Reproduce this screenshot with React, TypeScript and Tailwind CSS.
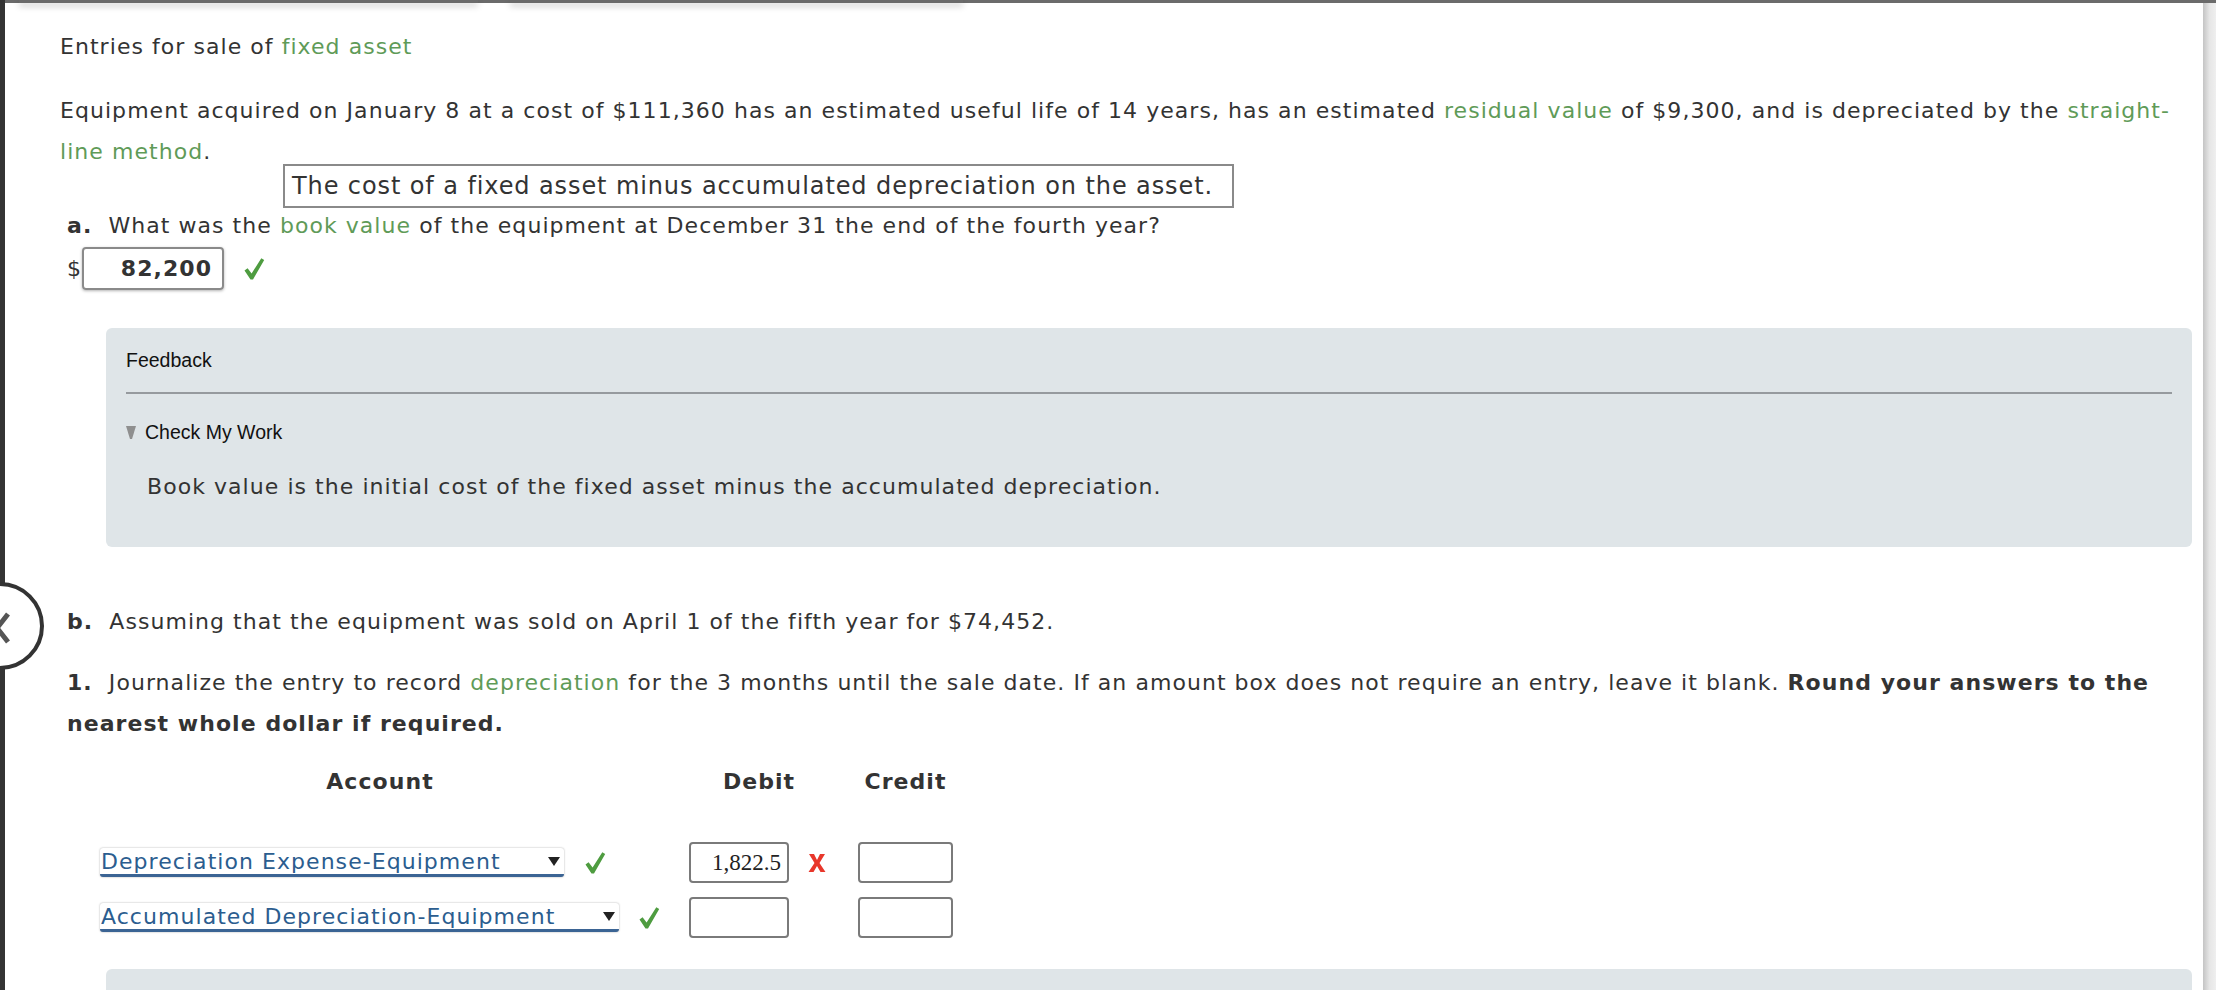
import React from "react";

const verdana = { fontFamily: '"DejaVu Sans", Verdana, sans-serif' };
const arial = { fontFamily: '"Liberation Sans", Arial, sans-serif' };
const times = { fontFamily: '"Liberation Serif", "Times New Roman", serif' };

function Term({ children }: { children: React.ReactNode }) {
    return <span className="text-[#5f9b58]">{children}</span>;
}

function Check({ className = "" }: { className?: string }) {
    return (
        <svg viewBox="0 0 22 24" className={`w-[22px] h-[24px] shrink-0 ${className}`}>
            <path d="M1.5 13.5 L4.6 11.3 L8.6 16.6 L18.3 1.2 L21.2 3 L10 22.6 L7.5 22.6 Z" fill="#4e9c40" />
        </svg>
    );
}

function Cross() {
    return (
        <svg viewBox="0 0 20 20" className="w-[20px] h-[20px] shrink-0">
            <path d="M2 1 L7 1 L10 7 L13 1 L18 1 L12.5 10 L18.5 19 L13.5 19 L10 13 L6.5 19 L1.5 19 L7.5 10 Z" fill="#e8372b" />
        </svg>
    );
}

function AccountSelect({ label, width }: { label: string; width: string }) {
    return (
        <div
            className={`${width} h-[29px] flex items-center justify-between bg-white rounded-[3px] border-b-[3px] border-[#3b6494] shadow-[0_0_2px_rgba(0,0,0,0.35)] text-[#2b5d8f] text-[22px] leading-none`}
        >
            <span className="pl-[1px] -mb-[2px]">{label}</span>
            <svg viewBox="0 0 12 9" className="w-[12px] h-[9px] mr-[4px]">
                <path d="M0 0 L12 0 L6 9 Z" fill="#222" />
            </svg>
        </div>
    );
}

function AmountInput({ value = "", width = "w-[100px]" }: { value?: string; width?: string }) {
    return (
        <div
            className={`${width} h-[41px] border-2 border-[#7a7a7a] rounded-[4px] bg-white flex items-center justify-end pr-[6px] text-[23px] text-[#222] tracking-normal`}
            style={times}
        >
            {value}
        </div>
    );
}

export default function App() {
    return (
        <div className="relative h-[990px] w-full overflow-hidden bg-white text-[#333] tracking-[1.05px]" style={verdana}>
            <div className="flex h-full">
                {/* left frame edge */}
                <div className="w-[5px] h-full bg-[#343434] shrink-0" />

                <div className="flex-1 flex flex-col">
                    {/* cut off tab strip */}
                    <div className="h-[3px] bg-[#6b6b6b] flex shrink-0">
                        <div className="ml-[14px] w-[459px] h-full shadow-[0_3px_6px_rgba(0,0,0,0.25)]" />
                        <div className="ml-[32px] w-[453px] h-full shadow-[0_3px_6px_rgba(0,0,0,0.25)]" />
                    </div>

                    <div className="pl-[55px] pr-[11px] text-[22px] leading-[41px]">
                        <p className="mt-[23px]">
                            Entries for sale of <Term>fixed asset</Term>
                        </p>

                        <p className="mt-[23px]">
                            Equipment acquired on January 8 at a cost of $111,360 has an estimated useful life of 14 years, has an estimated{" "}
                            <Term>residual value</Term> of $9,300, and is depreciated by the <Term>straight-line method</Term>.
                        </p>

                        {/* part a */}
                        <div className="relative mt-[33px] ml-[7px]">
                            <div className="absolute left-[216px] -top-[41px] w-[951px] h-[44px] border-2 border-[#8a8a8a] bg-white pl-[7px] flex items-center text-[24px] tracking-[0.9px] leading-none whitespace-nowrap">
                                The cost of a fixed asset minus accumulated depreciation on the asset.
                            </div>
                            <p>
                                <b>a.</b>&nbsp; What was the <Term>book value</Term> of the equipment at December 31 the end of the fourth year?
                            </p>
                            <div className="flex items-center mt-[1px]">
                                <span className="w-[15px]">$</span>
                                <div className="w-[142px] h-[43px] border-2 border-[#8a8a8a] rounded-[4px] shadow-[0_1px_3px_rgba(0,0,0,0.3)] flex items-center justify-end pr-[10px] font-bold text-[#333]">
                                    82,200
                                </div>
                                <Check className="ml-[19px]" />
                            </div>
                        </div>

                        {/* feedback */}
                        <div className="mt-[38px] ml-[46px] h-[219px] rounded-[6px] bg-[#dfe5e8] px-[20px] pt-[19px]">
                            <div className="text-[19.5px] leading-[26px] text-[#111] tracking-normal" style={arial}>
                                Feedback
                            </div>
                            <div className="mt-[19px] h-[2px] bg-[#969a9e]" />
                            <div className="mt-[25px] flex items-center text-[19.5px] leading-[26px] text-[#111] tracking-normal" style={arial}>
                                <svg viewBox="0 0 10 13" className="w-[10px] h-[13px] mr-[9px] mt-[1px]">
                                    <path d="M0 0 L10 0 L6 13 L4 13 Z" fill="#8f8f8f" />
                                </svg>
                                Check My Work
                            </div>
                            <p className="mt-[28px] ml-[21px] leading-[28px]">
                                Book value is the initial cost of the fixed asset minus the accumulated depreciation.
                            </p>
                        </div>

                        {/* part b */}
                        <div className="ml-[7px]">
                            <p className="mt-[54px]">
                                <b>b.</b>&nbsp; Assuming that the equipment was sold on April 1 of the fifth year for $74,452.
                            </p>
                            <p className="mt-[20px]">
                                <b>1.</b>&nbsp; Journalize the entry to record <Term>depreciation</Term> for the 3 months until the sale date. If an amount box does not require an entry, leave it blank.{" "}
                                <b>Round your answers to the nearest whole dollar if required.</b>
                            </p>
                        </div>

                        {/* journal */}
                        <div className="ml-[40px] mt-[17px]">
                            <div className="flex font-bold text-[#333]">
                                <div className="w-[560px] text-center">Account</div>
                                <div className="ml-[29px] w-[140px] text-center">Debit</div>
                                <div className="ml-[29px] w-[95px] text-center">Credit</div>
                            </div>

                            <div className="flex items-center mt-[40px]">
                                <div className="w-[560px] flex items-center">
                                    <AccountSelect label="Depreciation Expense-Equipment" width="w-[464px]" />
                                    <Check className="ml-[20px]" />
                                </div>
                                <div className="ml-[29px] w-[140px] flex items-center">
                                    <AmountInput value="1,822.5" />
                                    <div className="ml-[18px]">
                                        <Cross />
                                    </div>
                                </div>
                                <div className="ml-[29px]">
                                    <AmountInput width="w-[95px]" />
                                </div>
                            </div>

                            <div className="flex items-center mt-[14px]">
                                <div className="w-[560px] flex items-center">
                                    <AccountSelect label="Accumulated Depreciation-Equipment" width="w-[519px]" />
                                    <Check className="ml-[19px]" />
                                </div>
                                <div className="ml-[29px] w-[140px]">
                                    <AmountInput />
                                </div>
                                <div className="ml-[29px]">
                                    <AmountInput width="w-[95px]" />
                                </div>
                            </div>
                        </div>

                        <div className="mt-[31px] ml-[46px] h-[120px] rounded-[6px] bg-[#dfe5e8]" />
                    </div>
                </div>

                {/* scrollbar */}
                <div className="w-[13px] h-full shrink-0 bg-gradient-to-r from-[#c4c4c4] via-[#e6e6e6] to-[#efefef] border-t-[3px] border-[#6b6b6b]" />
            </div>

            {/* side navigation handle */}
            <div className="absolute -left-[44px] top-[582px] w-[88px] h-[88px] rounded-full border-[4px] border-[#333] bg-white">
                <svg viewBox="0 0 20 40" className="absolute right-[30px] top-[22px] w-[20px] h-[40px]">
                    <path d="M18 6 L7 20 L18 34" fill="none" stroke="#555" strokeWidth="5" />
                </svg>
            </div>
        </div>
    );
}
